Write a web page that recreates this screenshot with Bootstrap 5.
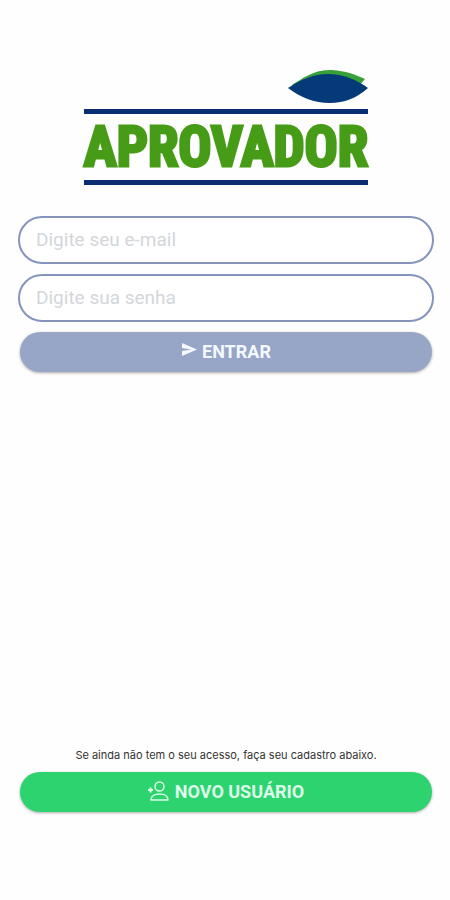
<!DOCTYPE html>
<html lang="pt-BR">
<head>
<meta charset="utf-8">
<meta name="viewport" content="width=device-width, initial-scale=1">
<title>Aprovador</title>
<link href="https://cdn.jsdelivr.net/npm/bootstrap@5.3.0/dist/css/bootstrap.min.css" rel="stylesheet">
<style>
  body { font-family: Roboto, "Liberation Sans", sans-serif; background: #fefefe; }
  .screen { padding: 70px 16px 88px 18px; }
  .brand { margin-bottom: 31px; }
  .brand-leaf { width: 80px; height: 34px; }
  .brand-name {
    margin: 5px 0 0; border: solid #0b2e72; border-width: 5px 0;
    font: 700 55px/66px Impact, "Roboto Condensed", "Open Sans Condensed", "Liberation Sans Narrow", sans-serif;
    color: #479c17; -webkit-text-stroke: 3px #479c17; white-space: nowrap;
  }
  .field {
    height: 48px; padding: 0 16px 2px; border: 2px solid #8494bb; border-radius: 24px;
    font-size: 19px; background: #fff;
  }
  .field::placeholder { color: #d3d6da; }
  .action {
    height: 40px; margin: 0 2px; padding: 0 0 2px; border: 0; border-radius: 20px;
    font-size: 18px; font-weight: 700; color: #f3f9ff; box-shadow: 0 1px 3px #0005;
  }
  .action-enter { background: #97a5c7; }
  .action-new { background: #2dd36f; color: #dcfbe8; }
  .hint { font: 11px/16px Inter, Roboto, sans-serif; color: #333; margin-bottom: 9px; }
  .fields { gap: 10px; }
  .action-icon { margin-right: 6px; }
</style>
</head>
<body>
<main class="screen d-flex flex-column min-vh-100">
  <header class="brand mx-auto d-flex flex-column">
    <svg class="brand-leaf align-self-end" viewBox="0 0 80 34" aria-hidden="true">
      <path d="M4 15C22 3 30 0 44 0c14 1 22 4 33 9l-6 7z" fill="#37a038"/>
      <path d="M0 18C14 9 26 4 40 4c15 0 29 6 40 14C69 28 56 33 42 33 26 33 12 27 0 18z" fill="#043a78"/>
    </svg>
    <h1 class="brand-name text-center">APROVADOR</h1>
  </header>
  <form class="fields d-flex flex-column">
    <input class="form-control field" type="email" placeholder="Digite seu e-mail" aria-label="E-mail">
    <input class="form-control field" type="password" placeholder="Digite sua senha" aria-label="Senha">
    <button class="btn action action-enter d-flex align-items-center justify-content-center" type="button">
      <svg class="me-1" width="17" height="16" viewBox="0 0 17 16" aria-hidden="true"><path d="M1 0l15 6.500L1 13V8l9-1.500L1 5z" fill="currentColor"/></svg>
      ENTRAR
    </button>
  </form>
  <footer class="mt-auto d-flex flex-column">
    <p class="hint text-center">Se ainda não tem o seu acesso, faça seu cadastro abaixo.</p>
    <button class="btn action action-new d-flex align-items-center justify-content-center" type="button">
      <svg class="action-icon" width="21" height="20" viewBox="0 0 21 20" fill="none" stroke="currentColor" stroke-width="1.500" aria-hidden="true"><circle cx="11.500" cy="5.500" r="4.500"/><path d="M3 19c0-4 4-6 8.500-6s8.500 2 8.500 6z" stroke-linejoin="round"/><path d="M0 9h5M2.500 6.500v5" stroke-width="2"/></svg>
      NOVO USUÁRIO
    </button>
  </footer>
</main>
<script src="https://cdn.jsdelivr.net/npm/bootstrap@5.3.0/dist/js/bootstrap.bundle.min.js"></script>
</body>
</html>
